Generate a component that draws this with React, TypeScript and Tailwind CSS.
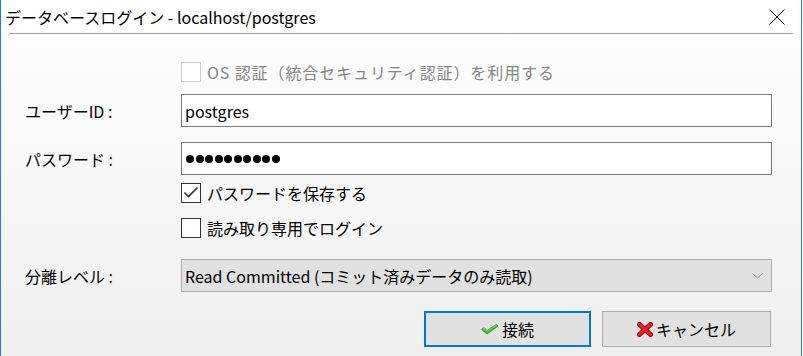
import React from "react";

function Box({ checked, disabled }: { checked?: boolean; disabled?: boolean }) {
  return (
    <div
      className={
        "w-[20px] h-[20px] shrink-0 border bg-white flex items-center justify-center " +
        (disabled ? "border-[#cccccc]" : "border-[#333333]")
      }
    >
      {checked && (
        <svg width="18" height="18" viewBox="0 0 18 18">
          <polyline points="2.5,8.5 6.5,12.5 15.5,3.5" fill="none" stroke="#333333" strokeWidth="1.6" />
        </svg>
      )}
    </div>
  );
}

export default function App() {
  return (
    <div className="w-[803px] h-[356px] bg-white font-['Noto_Sans_CJK_JP',sans-serif] text-[16px] text-black overflow-hidden">
      <div className="w-[802px] h-[356px] border-x border-[#1883d7] bg-linear-to-b from-white to-[#efefef] flex flex-col">
        <div className="h-[33px] shrink-0 flex items-center justify-between pl-[4px] pr-[16px]">
          <span className="leading-none text-[16px]">データベースログイン - localhost/postgres</span>
          <svg width="16" height="16" viewBox="0 0 16 16">
            <line x1="0.5" y1="0.5" x2="15.5" y2="15.5" stroke="#000" strokeWidth="1" />
            <line x1="15.5" y1="0.5" x2="0.5" y2="15.5" stroke="#000" strokeWidth="1" />
          </svg>
        </div>
        <div className="mx-[8px] h-px bg-[#a0a0a0] shrink-0" />

        <div className="flex flex-col pl-[24px]">
          <div className="flex items-center h-[20px] mt-[28px]">
            <div className="w-[156px]" />
            <Box disabled />
            <span className="ml-[6px] text-[#858585] leading-none tracking-[0.9px]">OS 認証（統合セキュリティ認証）を利用する</span>
          </div>

          <div className="flex items-center h-[33px] mt-[12px]">
            <div className="w-[156px] leading-none">ユーザーID :</div>
            <div className="w-[591px] h-[33px] border border-[#7a7a7a] bg-white flex items-center pl-[3px] leading-none">
              postgres
            </div>
          </div>

          <div className="flex items-center h-[33px] mt-[15px]">
            <div className="w-[156px] leading-none">パスワード :</div>
            <div className="w-[591px] h-[33px] border border-[#7a7a7a] bg-white flex items-center pl-[4px] gap-[1.5px]">
              {Array.from({ length: 10 }).map((_, i) => (
                <div key={i} className="w-[8px] h-[8px] rounded-full bg-black" />
              ))}
            </div>
          </div>

          <div className="flex items-center h-[20px] mt-[8px]">
            <div className="w-[156px]" />
            <Box checked />
            <span className="ml-[6px] leading-none">パスワードを保存する</span>
          </div>

          <div className="flex items-center h-[20px] mt-[15px]">
            <div className="w-[156px]" />
            <Box />
            <span className="ml-[6px] leading-none">読み取り専用でログイン</span>
          </div>

          <div className="flex items-center h-[33px] mt-[21px]">
            <div className="w-[156px] leading-none">分離レベル :</div>
            <div className="w-[591px] h-[33px] border border-[#adadad] bg-[#e1e1e1] flex items-center justify-between pl-[3px] pr-[8px] leading-none">
              <span>Read Committed (コミット済みデータのみ読取)</span>
              <svg width="11" height="6" viewBox="0 0 11 6">
                <polyline points="0.5,0.5 5.5,5 10.5,0.5" fill="none" stroke="#8a8a8a" strokeWidth="1" />
              </svg>
            </div>
          </div>
        </div>

        <div className="flex justify-end gap-[11px] pr-[30px] mt-[19px]">
          <div className="w-[167px] h-[36px] border-2 border-[#0078d7] bg-[#e1e1e1] flex items-center justify-center gap-[3px] leading-none">
            <svg width="18" height="11" viewBox="0 0 18 11">
              <path d="M0.5 5.5 L3 3.5 L6 6.5 L15.5 0.5 L17 2 L6 10 Z" fill="#4caf38" stroke="#2f8a22" strokeWidth="0.8" />
              <path d="M2 5.2 L3 4.4 L6 7.2 L15 1.6" fill="none" stroke="#a6e08e" strokeWidth="0.8" />
            </svg>
            <span>接続</span>
          </div>
          <div className="w-[169px] h-[36px] border border-[#adadad] bg-[#e1e1e1] flex items-center justify-center gap-[3px] leading-none">
            <svg width="16" height="15" viewBox="0 0 16 15">
              <line x1="2.5" y1="2.5" x2="13.5" y2="12.5" stroke="#a8090b" strokeWidth="5" strokeLinecap="round" />
              <line x1="13.5" y1="2.5" x2="2.5" y2="12.5" stroke="#a8090b" strokeWidth="5" strokeLinecap="round" />
              <line x1="2.5" y1="2.5" x2="13.5" y2="12.5" stroke="#e4232a" strokeWidth="3" strokeLinecap="round" />
              <line x1="13.5" y1="2.5" x2="2.5" y2="12.5" stroke="#e4232a" strokeWidth="3" strokeLinecap="round" />
            </svg>
            <span>キャンセル</span>
          </div>
        </div>
      </div>
    </div>
  );
}
